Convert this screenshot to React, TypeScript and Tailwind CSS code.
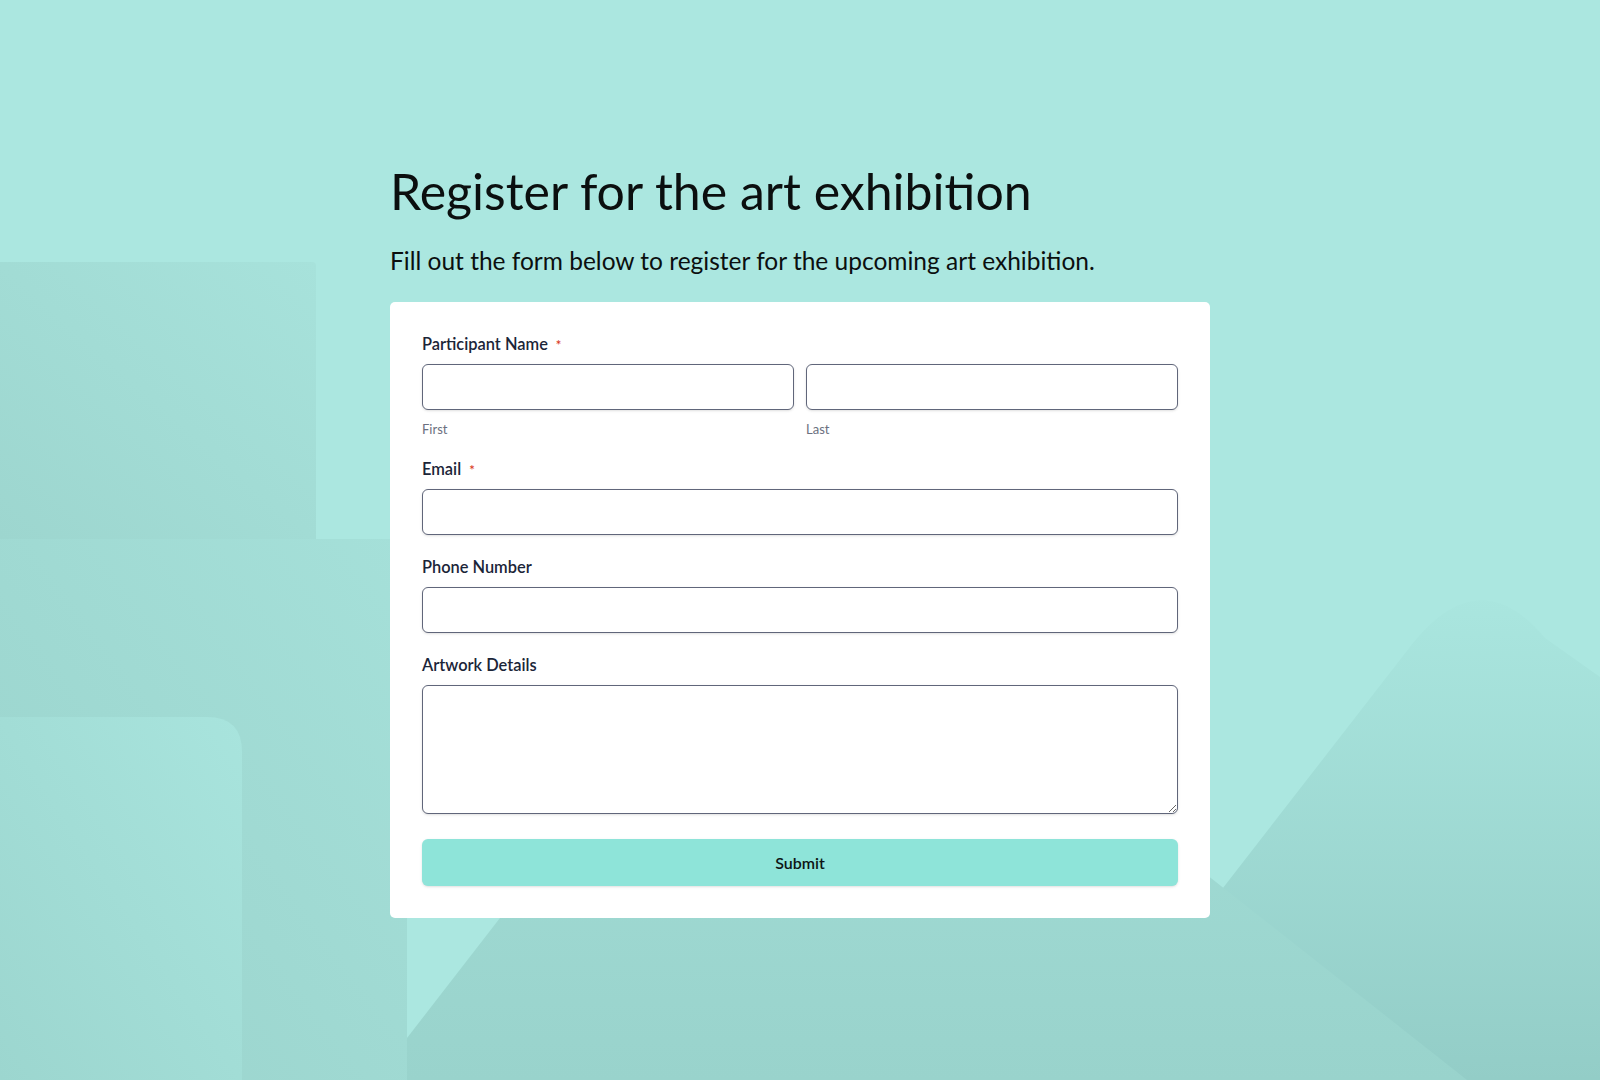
import React from 'react'

const font = { fontFamily: 'Lato, "Noto Sans", sans-serif' }

function Background() {
  return (
    <svg
      className="absolute inset-0 h-full w-full"
      viewBox="0 0 1600 1080"
      preserveAspectRatio="none"
      aria-hidden="true"
    >
      <defs>
        <linearGradient id="gA" x1="0" y1="1" x2="1" y2="0">
          <stop offset="0" stopColor="#9dd6cf" />
          <stop offset="1" stopColor="#a7e2db" />
        </linearGradient>
        <linearGradient id="gB" x1="0" y1="1" x2="1" y2="0">
          <stop offset="0" stopColor="#9ad3cc" />
          <stop offset="1" stopColor="#a5e0d9" />
        </linearGradient>
        <linearGradient id="gC" x1="0" y1="1" x2="1" y2="0">
          <stop offset="0" stopColor="#9cd6cf" />
          <stop offset="1" stopColor="#a8e4dd" />
        </linearGradient>
        <linearGradient id="gE" gradientUnits="userSpaceOnUse" x1="0" y1="545" x2="0" y2="1080">
          <stop offset="0" stopColor="#a6e1da" />
          <stop offset="1" stopColor="#99d3cc" />
        </linearGradient>
        <linearGradient id="gM" gradientUnits="userSpaceOnUse" x1="0" y1="593" x2="0" y2="1080">
          <stop offset="0" stopColor="#aae6df" />
          <stop offset="1" stopColor="#93cdc7" />
        </linearGradient>
      </defs>
      <rect width="1600" height="1080" fill="#abe7e0" />
      <path d="M0 262 H312 Q316 262 316 266 V539 H0 Z" fill="url(#gA)" />
      <rect x="0" y="539" width="407" height="541" fill="url(#gB)" />
      <path d="M0 717 H207 Q242 717 242 752 V1080 H0 Z" fill="url(#gC)" />
      <path
        d="M1074 1080 L1413 643 Q1480 560 1545 638 L1600 677 V1080 Z"
        fill="url(#gM)"
      />
      <path d="M407 1038 L789 545 L1467 1080 L407 1080 Z" fill="url(#gE)" />
    </svg>
  )
}

function Label({ text, required }: { text: string; required?: boolean }) {
  return (
    <label className="mb-2 block h-6 text-[16.4px] leading-6 font-semibold text-[#1b2538]">
      {text}
      {required && <span className="ml-2 text-[13px] text-[#d93a22]">*</span>}
    </label>
  )
}

const inputCls =
  'block h-[46px] w-full rounded-md border border-[#60667a] bg-white px-3 shadow-sm outline-none'

export default function App() {
  return (
    <div className="relative h-[1080px] w-full overflow-hidden" style={font}>
      <Background />
      <div className="relative mx-auto w-[820px] pt-[160px]">
        <h1 className="h-[62px] text-[50px] leading-[62px] font-normal text-[#0b0f0f]">
          Register for the art exhibition
        </h1>
        <p className="mt-[21px] h-9 text-[24.5px] leading-9 text-[#0b0f0f]">
          Fill out the form below to register for the upcoming art exhibition.
        </p>
        <form className="mt-[23px] flex flex-col gap-5 rounded-[5px] bg-white px-8 pt-[30px] pb-8">
          <div>
            <Label text="Participant Name" required />
            <div className="grid grid-cols-2 gap-3">
              <div>
                <input className={inputCls} />
                <div className="mt-[11px] h-4 text-[13px] leading-4 text-[#6b7080]">First</div>
              </div>
              <div>
                <input className={inputCls} />
                <div className="mt-[11px] h-4 text-[13px] leading-4 text-[#6b7080]">Last</div>
              </div>
            </div>
          </div>
          <div>
            <Label text="Email" required />
            <input className={inputCls} type="email" />
          </div>
          <div>
            <Label text="Phone Number" />
            <input className={inputCls} type="tel" />
          </div>
          <div>
            <Label text="Artwork Details" />
            <textarea className="block h-[129px] w-full rounded-md border border-[#60667a] bg-white px-3 py-2 shadow-sm outline-none" />
          </div>
          <button
            type="button"
            className="mt-[5px] h-[47px] w-full rounded-md bg-[#8ee4d9] text-base font-semibold text-[#0d1414] shadow-sm"
          >
            Submit
          </button>
        </form>
      </div>
    </div>
  )
}
